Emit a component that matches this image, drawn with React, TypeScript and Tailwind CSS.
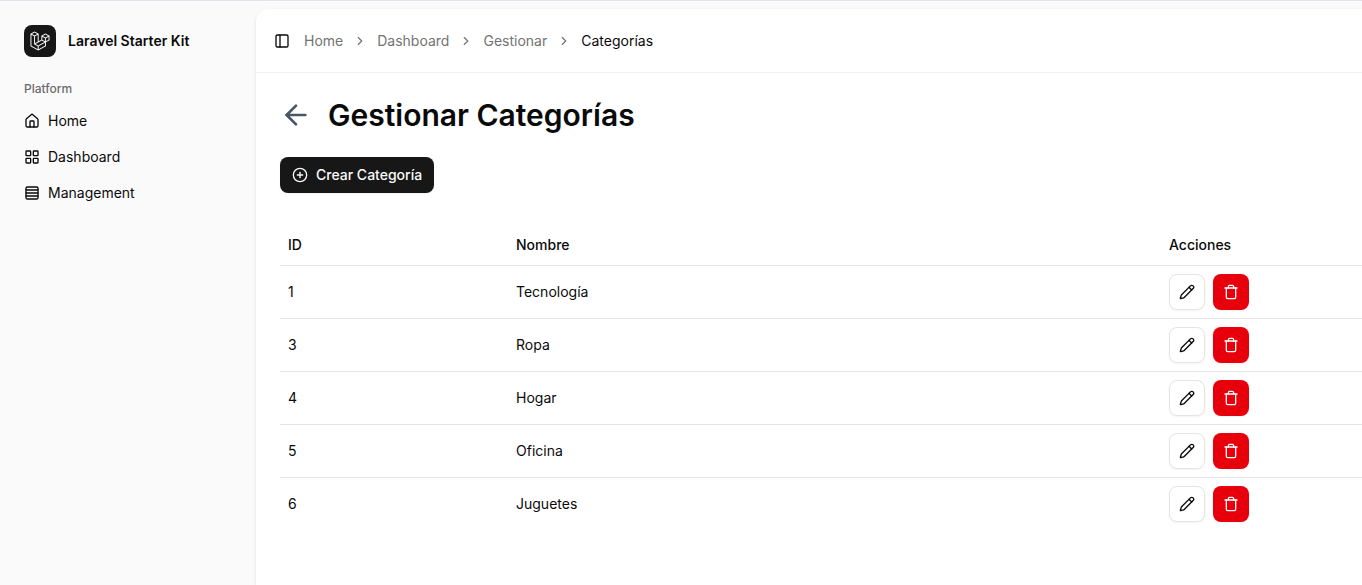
import {
  ArrowLeft,
  ChevronRight,
  CirclePlus,
  House,
  LayoutGrid,
  PanelLeft,
  Pencil,
  Rows4,
  Trash,
} from 'lucide-react';

const navItems = [
  { label: 'Home', icon: House },
  { label: 'Dashboard', icon: LayoutGrid },
  { label: 'Management', icon: Rows4 },
];

const trail = ['Home', 'Dashboard', 'Gestionar'];

const categories = [
  { id: 1, name: 'Tecnología' },
  { id: 3, name: 'Ropa' },
  { id: 4, name: 'Hogar' },
  { id: 5, name: 'Oficina' },
  { id: 6, name: 'Juguetes' },
];

function LaravelIcon() {
  return (
    <svg viewBox="0 0 40 42" className="size-5 fill-white" aria-hidden="true">
      <path
        fillRule="evenodd"
        clipRule="evenodd"
        d="M17.2 5.63325L8.6 0.855469L0 5.63325V32.1434L16.2 41.1434L32.4 32.1434V23.699L40 19.4767V9.85547L31.4 5.07769L22.8 9.85547V18.2999L17.2 21.411V5.63325ZM38 18.2999L32.4 21.411V15.2545L38 12.1434V18.2999ZM36.9409 10.4439L31.4 13.5221L25.8591 10.4439L31.4 7.36561L36.9409 10.4439ZM24.8 18.2999V12.1434L30.4 15.2545V21.411L24.8 18.2999ZM23.8 20.0323L29.3409 23.1105L16.2 30.411L10.6591 27.3328L23.8 20.0323ZM7.6 27.9212L15.2 32.1434V38.2999L2 30.9666V7.92116L7.6 11.0323V27.9212ZM8.6 9.29991L3.05913 6.22165L8.6 3.14339L14.1409 6.22165L8.6 9.29991ZM30.4 24.8101L17.2 32.1434V38.2999L30.4 30.9666V24.8101ZM9.6 11.0323L15.2 7.92117V22.5221L9.6 25.6333V11.0323Z"
      />
    </svg>
  );
}

function Sidebar() {
  return (
    <aside className="w-64 shrink-0 p-2">
      <div className="p-2">
        <a href="#" className="flex h-12 items-center gap-3 rounded-lg p-2">
          <span className="flex size-8 items-center justify-center rounded-lg bg-[#171717]">
            <LaravelIcon />
          </span>
          <span className="text-sm leading-5 font-semibold whitespace-nowrap">
            Laravel Starter Kit
          </span>
        </a>
      </div>
      <nav className="px-2" aria-labelledby="platform-label">
        <h2
          id="platform-label"
          className="flex h-8 items-center px-2 text-xs font-medium text-[#6c6c6c]"
        >
          Platform
        </h2>
        <ul className="flex flex-col gap-1">
          {navItems.map(({ label, icon: Icon }) => (
            <li key={label}>
              <a href="#" className="flex h-8 items-center gap-2 rounded-lg px-2 text-sm">
                <Icon size={16} />
                {label}
              </a>
            </li>
          ))}
        </ul>
      </nav>
    </aside>
  );
}

function Header() {
  return (
    <header className="flex h-16 items-center gap-2 border-b border-[#efefef] px-3">
      <button
        type="button"
        aria-label="Toggle Sidebar"
        className="flex size-7 items-center justify-center rounded-lg"
      >
        <PanelLeft size={16} />
      </button>
      <nav aria-label="Breadcrumb">
        <ol className="flex items-center gap-2.5 text-sm text-[#737373]">
          {trail.map((label) => (
            <li key={label} className="flex items-center gap-2.5">
              <a href="#">{label}</a>
              <ChevronRight size={14} />
            </li>
          ))}
          <li aria-current="page" className="text-[#0a0a0a]">
            Categorías
          </li>
        </ol>
      </nav>
    </header>
  );
}

function CategoryTable() {
  return (
    <table className="w-full table-fixed text-left text-sm">
      <thead>
        <tr className="h-10 border-b border-[#e5e5e5]">
          <th className="w-[228px] px-2 font-medium">ID</th>
          <th className="px-2 font-medium">Nombre</th>
          <th className="w-[201px] px-2 font-medium">Acciones</th>
        </tr>
      </thead>
      <tbody>
        {categories.map(({ id, name }) => (
          <tr key={id} className="border-b border-[#e5e5e5] last:border-b-0">
            <td className="p-2">{id}</td>
            <td className="p-2">{name}</td>
            <td className="p-2">
              <div className="flex gap-2">
                <button
                  type="button"
                  aria-label={`Editar ${name}`}
                  className="flex size-9 items-center justify-center rounded-lg border border-[#e5e5e5] bg-white shadow-xs"
                >
                  <Pencil size={16} />
                </button>
                <button
                  type="button"
                  aria-label={`Eliminar ${name}`}
                  className="flex size-9 items-center justify-center rounded-lg bg-[#e7000b] text-white shadow-xs"
                >
                  <Trash size={16} />
                </button>
              </div>
            </td>
          </tr>
        ))}
      </tbody>
    </table>
  );
}

export default function App() {
  return (
    <div className="flex min-h-screen border-t border-[#e0e3ee] bg-[#fafafa] font-['Inter','Liberation_Sans',sans-serif] text-[#0a0a0a]">
      <Sidebar />
      <main className="mt-2 min-w-0 flex-1 rounded-tl-xl bg-white shadow-sm">
        <Header />
        <div className="pt-6 pl-6">
          <div className="mb-6 flex items-center gap-4">
            <a href="#" aria-label="Volver" className="text-[#4a5565]">
              <ArrowLeft size={32} />
            </a>
            <h1 className="text-3xl leading-9 font-semibold">Gestionar Categorías</h1>
          </div>
          <button
            type="button"
            className="mb-8 flex h-9 items-center gap-2 rounded-lg bg-[#171717] px-3 text-sm font-medium text-[#fafafa] shadow-xs"
          >
            <CirclePlus size={16} />
            Crear Categoría
          </button>
          <CategoryTable />
        </div>
      </main>
    </div>
  );
}
